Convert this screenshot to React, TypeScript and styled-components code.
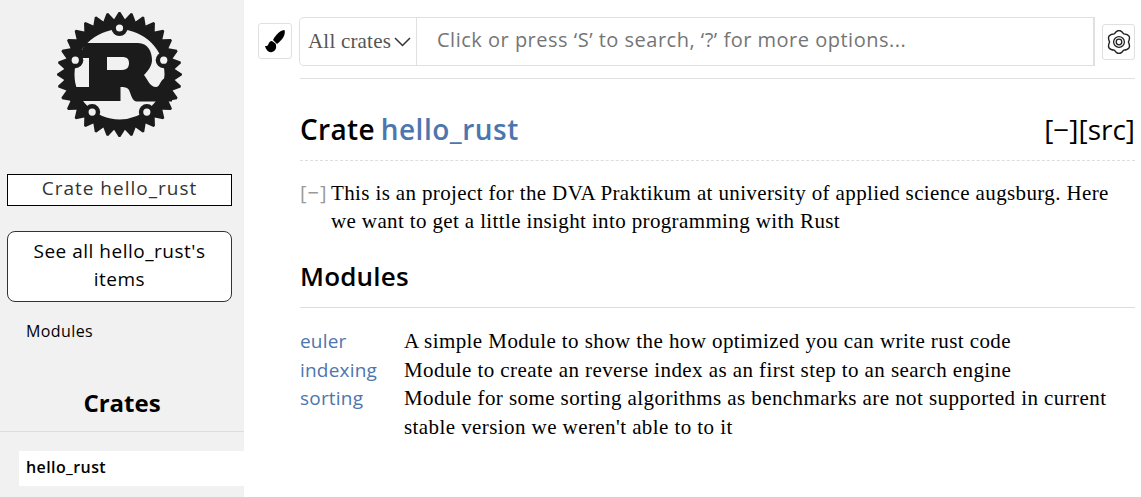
import React from "react";
import { styled, createGlobalStyle } from "styled-components";

const SANS = `"Open Sans", "Noto Sans", sans-serif`;
const SERIF = `"Liberation Serif", serif`;

const GlobalStyle = createGlobalStyle`
  html, body {
    margin: 0;
    padding: 0;
    background: #fff;
    color: #000;
    overflow: hidden;
  }
  * {
    box-sizing: border-box;
  }
`;

const Page = styled.div`
  display: flex;
  height: 497px;
  width: 1141px;
  overflow: hidden;
`;

const Sidebar = styled.nav`
  width: 244px;
  flex: none;
  background: #f1f1f1;
  padding-top: 10px;
  font-family: ${SANS};
`;

const LogoLink = styled.svg`
  display: block;
  width: 130px;
  height: 130px;
  margin-left: 55px;
  margin-bottom: 34px;
`;

const Location = styled.p`
  margin: 0 0 0 7px;
  width: 225px;
  height: 32px;
  border: 1px solid #000;
  background: #fff;
  color: #333;
  text-align: center;
  font-size: 19px;
  letter-spacing: 1px;
  line-height: 27px;
`;

const AllItems = styled.a`
  display: block;
  margin: 25px 0 0 7px;
  width: 225px;
  height: 71px;
  border: 1px solid #333;
  border-radius: 8px;
  background: #fff;
  color: #000;
  text-align: center;
  font-size: 19px;
  letter-spacing: 0.5px;
  line-height: 28px;
  padding: 5px 20px 0;
`;

const SideLink = styled.a`
  display: block;
  margin: 18px 0 0 26px;
  color: #000;
  font-size: 16px;
  letter-spacing: 0.4px;
  line-height: 22px;
`;

const SideTitle = styled.h3`
  margin: 45px 0 0;
  height: 45px;
  border-bottom: 1px solid #ddd;
  text-align: center;
  font-size: 24px;
  line-height: 32px;
  font-weight: 700;
`;

const CrateItem = styled.a`
  display: block;
  margin: 19px 0 0 19px;
  height: 35px;
  background: #fff;
  padding-left: 7px;
  color: #000;
  font-size: 16px;
  font-weight: 600;
  letter-spacing: 0.4px;
  line-height: 32px;
`;

const Main = styled.main`
  flex: 1;
  min-width: 0;
  padding: 17px 6px 0 14px;
`;

const Toolbar = styled.div`
  display: flex;
  align-items: flex-start;
  gap: 7px;
`;

const IconButton = styled.button<{ $top: number; $width: number }>`
  flex: none;
  width: ${(p) => p.$width}px;
  height: 36px;
  margin-top: ${(p) => p.$top}px;
  padding: 0;
  display: flex;
  align-items: center;
  justify-content: center;
  background: #fff;
  border: 1px solid #e0e0e0;
  border-radius: 3px;
`;

const SearchForm = styled.form`
  flex: 1;
  min-width: 0;
  display: flex;
  height: 49px;
  border: 1px solid #e0e0e0;
  border-right-width: 2px;
  border-radius: 5px 0 0 5px;
`;

const CrateSelect = styled.div`
  flex: none;
  width: 117px;
  display: flex;
  align-items: center;
  gap: 3px;
  padding-left: 8px;
  border-right: 1px solid #e0e0e0;
  color: #555;
  font-family: ${SERIF};
  font-size: 21px;
  letter-spacing: 0.2px;
  white-space: nowrap;
`;

const SearchInput = styled.input`
  flex: 1;
  min-width: 0;
  border: 0;
  outline: 0;
  padding: 0 0 4px 20px;
  font-family: ${SANS};
  font-size: 20px;
  letter-spacing: 0.5px;
  &::placeholder {
    color: #757575;
    opacity: 1;
  }
`;

const Content = styled.section`
  margin: 12px 0 0 42px;
  border-top: 1px solid #e0e0e0;
`;

const TitleRow = styled.h1`
  display: flex;
  justify-content: space-between;
  margin: 0;
  height: 82px;
  padding-top: 32px;
  border-bottom: 1px dashed #ddd;
  font-family: ${SANS};
  font-size: 28px;
  font-weight: 600;
  letter-spacing: 0.35px;
  word-spacing: -2px;
  line-height: 36px;
`;

const CrateName = styled.a`
  color: #4d76ae;
  letter-spacing: 0.5px;
`;

const OutOfBand = styled.span`
  font-weight: 400;
  letter-spacing: 0;
`;

const DocBlock = styled.div`
  display: flex;
  margin-top: 18px;
  font-family: ${SERIF};
  font-size: 21px;
  letter-spacing: 0.37px;
  line-height: 28px;
`;

const Toggle = styled.span`
  flex: none;
  width: 31px;
  color: #999;
  font-family: ${SANS};
  font-size: 20px;
  letter-spacing: 1px;
`;

const Paragraph = styled.p`
  margin: 0;
`;

const SectionHeader = styled.h2`
  margin: 18px 0 0;
  height: 55px;
  padding-top: 5px;
  border-bottom: 1px solid #ddd;
  font-family: ${SANS};
  font-size: 26px;
  font-weight: 600;
  letter-spacing: 0.2px;
  line-height: 36px;
`;

const ItemTable = styled.div`
  display: grid;
  grid-template-columns: 104px 1fr;
  margin-top: 19px;
  padding-right: 14px;
  line-height: 28.6px;
`;

const ItemName = styled.a`
  color: #4d76ae;
  font-family: ${SANS};
  font-size: 19px;
  letter-spacing: 0.2px;
`;

const ItemDesc = styled.div`
  font-family: ${SERIF};
  font-size: 21px;
  letter-spacing: 0.42px;
`;

// teeth of the rust logo, computed around the centre of the gear
const CX = 119.5;
const CY = 74.5;
const gearPoints = Array.from({ length: 32 }, (_, i) => {
  const a = (i / 32) * Math.PI * 2 - Math.PI / 2;
  const pt = (r: number, off: number) =>
    `${(CX + r * Math.cos(a + off)).toFixed(2)},${(CY + r * Math.sin(a + off)).toFixed(2)}`;
  return [pt(55.5, -0.098), pt(62.5, -0.014), pt(62.5, 0.014), pt(55.5, 0.098)].join(" ");
}).join(" ");

const holes = [0, 1, 2, 3, 4].map((i) => {
  const a = (i / 5) * Math.PI * 2 - Math.PI / 2;
  return { x: CX + 46.5 * Math.cos(a), y: CY + 46.5 * Math.sin(a) };
});

const RustLogo = () => (
  <LogoLink viewBox="55 10 130 130">
    <polygon points={gearPoints} fill="#1b1b1b" />
    <circle cx={CX} cy={CY} r={45} fill="#f1f1f1" />
    <path
      fill="#1b1b1b"
      fillRule="evenodd"
      d="M86 43H138C148 43 152 52 152 60C152 66 148 71 144 75C148 80 150 87 156 87C160 87 160 80 165 78L172 78V101.5H137C132 101.5 131 94 129 90C127 87 124 87 120.5 87V101H70V87H89V58H70V50H82ZM107 57V70H122C128 70 129 66 129 63C129 59 127 57 122 57Z"
    />
    {holes.map((h) => (
      <g key={h.x}>
        <circle cx={h.x} cy={h.y} r={8} fill="#1b1b1b" />
        <circle cx={h.x} cy={h.y} r={3.6} fill="#f1f1f1" />
      </g>
    ))}
  </LogoLink>
);

const BrushIcon = () => (
  <svg width="21" height="23" viewBox="0 0 21 23">
    <path d="M19.5 0C16 0 11 4 8 10L12 14C17 10 21 5 19.5 0Z" fill="#000" />
    <path d="M7 11C4.500 11 4 13 3 15C2 16.500 1 16 0 16C1 20 4 23 7 22C11 21 12 17 10.500 13.500Z" fill="#000" />
  </svg>
);

// six rounded lobes, the valleys stay sharp
const wheelPath = Array.from({ length: 6 }, (_, i) => {
  const a = (i / 6) * Math.PI * 2 - Math.PI / 2;
  const p = (r: number, ang: number) =>
    `${(12 + r * Math.cos(ang)).toFixed(2)} ${(12 + r * Math.sin(ang)).toFixed(2)}`;
  const start = i === 0 ? `M${p(9.4, a - Math.PI / 6)}` : "";
  return `${start}Q${p(15, a)} ${p(9.4, a + Math.PI / 6)}`;
}).join("") + "Z";

const WheelIcon = () => (
  <svg width="24" height="24" viewBox="0 0 24 24" fill="none" stroke="#222">
    <path d={wheelPath} strokeWidth="1.4" strokeLinejoin="round" />
    <circle cx="12" cy="12" r="5.4" strokeWidth="1.3" />
    <circle cx="12" cy="12" r="2.8" strokeWidth="1.3" />
  </svg>
);

const Chevron = () => (
  <svg width="17" height="10" viewBox="0 0 17 10" fill="none" stroke="#333" strokeWidth="1.5">
    <path d="M1 1l7.500 7.500L16 1" />
  </svg>
);

const modules = [
  { name: "euler", desc: "A simple Module to show the how optimized you can write rust code" },
  { name: "indexing", desc: "Module to create an reverse index as an first step to an search engine" },
  {
    name: "sorting",
    desc: "Module for some sorting algorithms as benchmarks are not supported in current stable version we weren't able to to it",
  },
];

const App: React.FC = () => {
  return (
    <Page>
      <GlobalStyle />
      <Sidebar>
        <RustLogo />
        <Location>Crate hello_rust</Location>
        <AllItems>See all hello_rust's items</AllItems>
        <SideLink>Modules</SideLink>
        <SideTitle>Crates</SideTitle>
        <CrateItem>hello_rust</CrateItem>
      </Sidebar>
      <Main>
        <Toolbar>
          <IconButton $top={6} $width={34}>
            <BrushIcon />
          </IconButton>
          <SearchForm>
            <CrateSelect>
              All crates
              <Chevron />
            </CrateSelect>
            <SearchInput placeholder="Click or press ‘S’ to search, ‘?’ for more options..." />
          </SearchForm>
          <IconButton $top={7} $width={33}>
            <WheelIcon />
          </IconButton>
        </Toolbar>
        <Content>
          <TitleRow>
            <span>
              Crate <CrateName>hello_rust</CrateName>
            </span>
            <OutOfBand>[−][src]</OutOfBand>
          </TitleRow>
          <DocBlock>
            <Toggle>[−]</Toggle>
            <Paragraph>
              This is an project for the DVA Praktikum at university of applied science augsburg. Here we want to get a
              little insight into programming with Rust
            </Paragraph>
          </DocBlock>
          <SectionHeader>Modules</SectionHeader>
          <ItemTable>
            {modules.map((m) => (
              <React.Fragment key={m.name}>
                <ItemName>{m.name}</ItemName>
                <ItemDesc>{m.desc}</ItemDesc>
              </React.Fragment>
            ))}
          </ItemTable>
        </Content>
      </Main>
    </Page>
  );
};

export default App;
